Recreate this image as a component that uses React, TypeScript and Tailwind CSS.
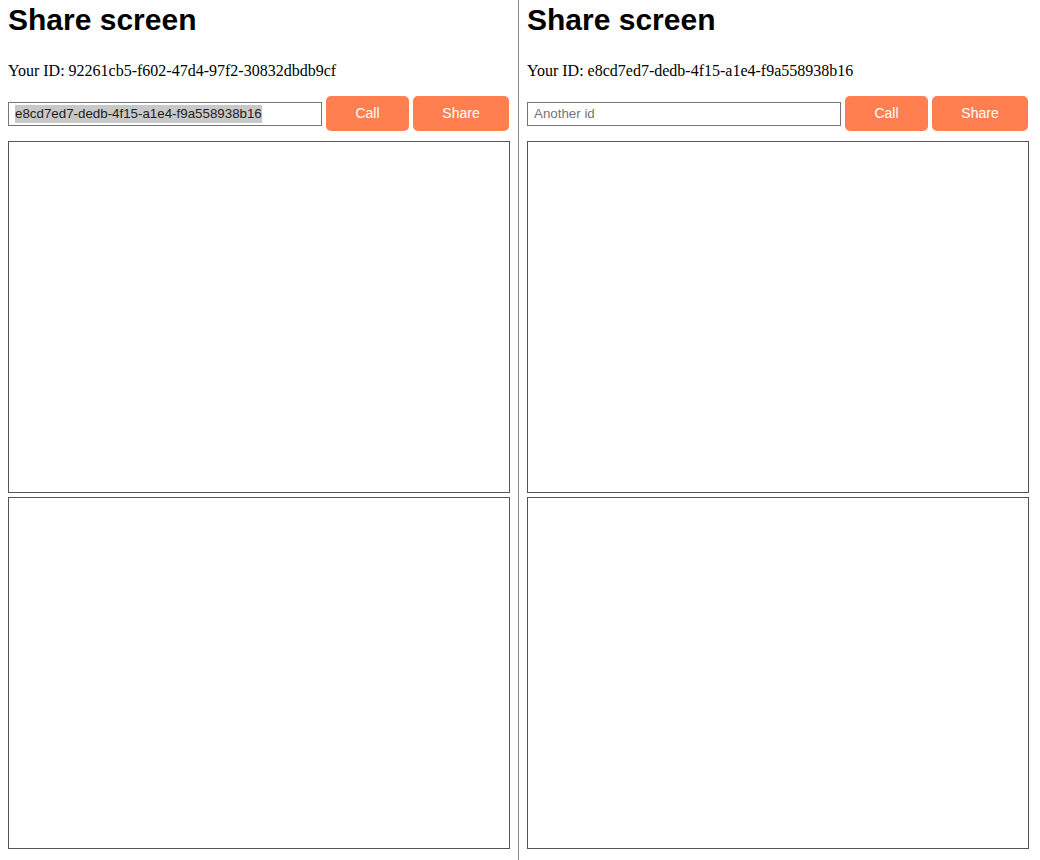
import React from "react";

const ids = {
  left: "92261cb5-f602-47d4-97f2-30832dbdb9cf",
  right: "e8cd7ed7-dedb-4f15-a1e4-f9a558938b16",
};

function Controls({ value }: { value?: string }) {
  return (
    <div className="flex items-center gap-1">
      {value ? (
        <div className="w-[314px] h-6 border border-[#767676] px-[6px] flex items-center font-['Liberation_Sans',Arial,sans-serif] text-[13.33px] text-[#222]">
          <span className="bg-[#c8c8c8] leading-[18px]">{value}</span>
        </div>
      ) : (
        <input
          placeholder="Another id"
          className="w-[314px] h-6 border border-[#767676] px-[6px] font-['Liberation_Sans',Arial,sans-serif] text-[13.33px] text-[#111] placeholder:text-[#757575] outline-none"
        />
      )}
      <button className="h-[35px] w-[83px] rounded-[5px] bg-[#ff7f50] text-white text-[14px] font-['Liberation_Sans',Arial,sans-serif]">
        Call
      </button>
      <button className="h-[35px] w-[96px] rounded-[5px] bg-[#ff7f50] text-white text-[14px] font-['Liberation_Sans',Arial,sans-serif]">
        Share
      </button>
    </div>
  );
}

function Pane({ myId, value }: { myId: string; value?: string }) {
  return (
    <div className="px-2 pt-[5px]">
      <h1 className="font-['Liberation_Sans',Arial,sans-serif] font-bold text-[30px] leading-[30px] text-black">
        Share screen
      </h1>
      <p className="mt-[27px] font-['Liberation_Serif','Times_New_Roman',serif] text-[16px] leading-[18px] text-black">
        Your ID: {myId}
      </p>
      <div className="mt-[16px]">
        <Controls value={value} />
      </div>
      <div className="mt-[10px] flex flex-col gap-1">
        <div className="w-[502px] h-[352px] border border-[#555]" />
        <div className="w-[502px] h-[352px] border border-[#555]" />
      </div>
    </div>
  );
}

export default function App() {
  return (
    <div className="flex w-[1040px] h-[860px] bg-white overflow-hidden">
      <div className="w-[519px] border-r border-[#888] shrink-0">
        <Pane myId={ids.left} value={ids.right} />
      </div>
      <div className="flex-1">
        <Pane myId={ids.right} />
      </div>
    </div>
  );
}
